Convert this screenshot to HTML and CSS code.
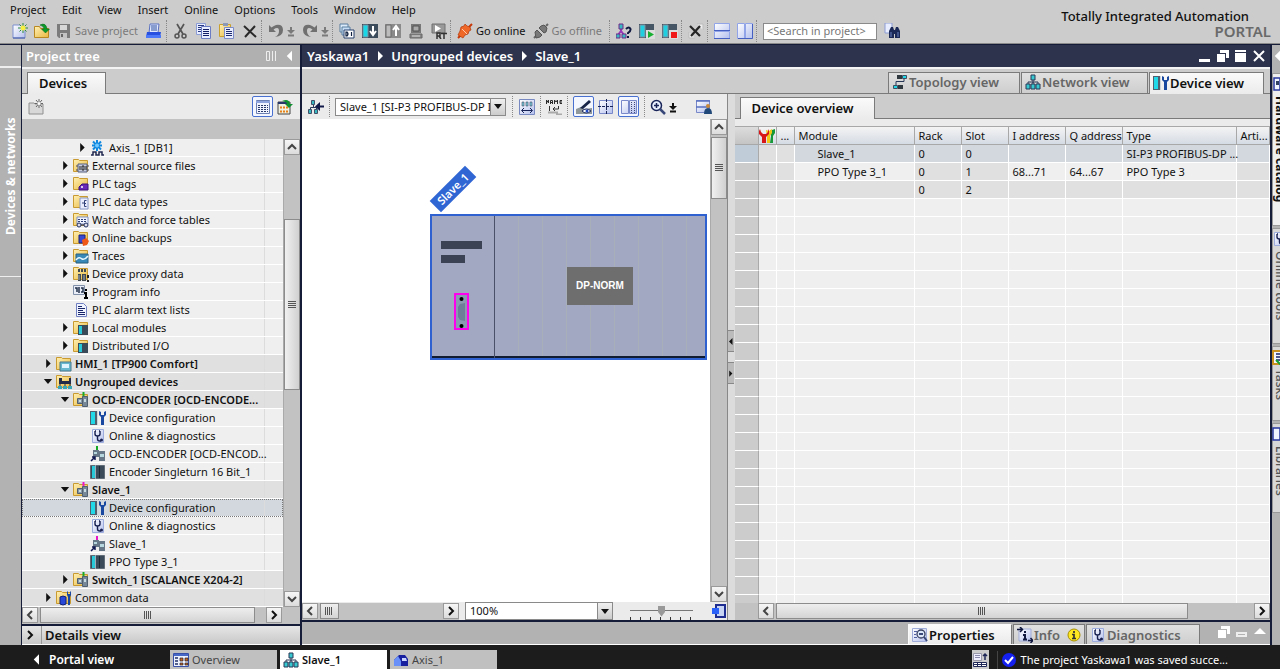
FILE: index.html
```html
<!DOCTYPE html>
<html lang="en">
<head>
<meta charset="utf-8">
<title>Totally Integrated Automation Portal</title>
<link rel="stylesheet" href="styles.css">
</head>
<body>
<svg class="sprite" aria-hidden="true">
  <defs>
    <linearGradient id="gf" x1="0" y1="0" x2="1" y2="1"><stop offset="0" stop-color="#fff0b4"/><stop offset="1" stop-color="#e8b840"/></linearGradient>
    <linearGradient id="gb" x1="0" y1="0" x2="1" y2="1"><stop offset="0" stop-color="#fff"/><stop offset="1" stop-color="#b4c0ee"/></linearGradient>
  </defs>
  <symbol id="new" viewBox="0 0 16 16"><path d="M1 2h7l5 5v8H1z" fill="url(#gb)" stroke="#7d8fce"/><path d="M1 15h12" stroke="#4058a8"/><path d="M11 0v10M6 5h10M7.500 1.500l7 7M14.500 1.500l-7 7" stroke="#2c8a3c"/><circle cx="11" cy="5" r="2.500" fill="#f8f040"/></symbol>
  <symbol id="open" viewBox="0 0 16 16"><path d="M.5 3.500h5l1 2h8v9H.5z" fill="url(#gf)" stroke="#b98820"/><path d="M6 2q6-3 7 4h2.500l-4 4-4-4H10Q10 3 6 2z" fill="#0a9a2a" stroke="#056018" stroke-width=".5"/></symbol>
  <symbol id="save" viewBox="0 0 16 16"><path d="M1 1h13v14H3l-2-2z" fill="#7c7c7c"/><path d="M4 2h7v5H4z" fill="#d8d8d8"/><path d="M4 10h7v5H4z" fill="#c4c4c4"/><path d="M5 11h2v3H5z" fill="#666"/></symbol>
  <symbol id="print" viewBox="0 0 16 16"><path d="M4 1h9l-1 9H3z" fill="#dfe8ff" stroke="#5a70c0"/><path d="M5 3h6M5 5h6M5 7h6" stroke="#3050a0"/><path d="M1 9h14l-1 5H0z" fill="#2850e0"/><path d="M0 12h15v3H0z" fill="#4a78f8"/></symbol>
  <symbol id="cut" viewBox="0 0 16 16"><path d="M4 1l6 10M11 1L5 11" stroke="#555" stroke-width="1.700"/><circle cx="4" cy="13" r="2" fill="none" stroke="#555" stroke-width="1.500"/><circle cx="11" cy="13" r="2" fill="none" stroke="#555" stroke-width="1.500"/></symbol>
  <symbol id="copy" viewBox="0 0 16 16"><path d="M.5.5h9v11h-9z" fill="#e8edff" stroke="#8c9cd4"/><path d="M2 2.500h6M2 4.500h6M2 6.500h6M2 8.500h6" stroke="#283880"/><path d="M5.500 3.500h9v12h-9z" fill="#e8edff" stroke="#6c7cc4"/><path d="M7 6.500h6M7 8.500h6M7 10.500h6M7 12.500h6" stroke="#101c68"/></symbol>
  <symbol id="paste" viewBox="0 0 16 16"><path d="M.5 1.500h11v12H.5z" fill="url(#gf)" stroke="#c8a030"/><path d="M4 0h5v3H4z" fill="#8c98b8"/><path d="M5.500 4.500h9v11h-9z" fill="#e8edff" stroke="#7c8cc8"/><path d="M7 6.500h4M7 8.500h6M7 10.500h6M7 12.500h6" stroke="#202c70"/></symbol>
  <symbol id="del" viewBox="0 0 16 16"><path d="M2 3l12 11M13 3L3 14" stroke="#2a2a2a" stroke-width="2"/></symbol>
  <symbol id="undo" viewBox="0 0 16 16"><path d="M1 2v7h7L5.500 6.500Q11 3 11 8q0 4-4 6 8-1 8-7 0-6-7-5-3 1-4.500 2.500z" fill="#707070"/></symbol>
  <symbol id="redo" viewBox="0 0 16 16"><path d="M15 2v7H8l2.500-2.500Q5 3 5 8q0 4 4 6-8-1-8-7 0-6 7-5 3 1 4.500 2.500z" fill="#707070"/></symbol>
  <symbol id="drop" viewBox="0 0 8 16"><path d="M4 4v4M1 12.500h6" stroke="currentColor" stroke-width="2"/><path d="M0 7h8l-4 4z" fill="currentColor"/></symbol>
  <symbol id="compile" viewBox="0 0 16 16"><path d="M1 1h8v8H1z" fill="#dcebfa" stroke="#5b7f9f"/><path d="M3 4h8v8H3z" fill="#c5def5" stroke="#5b7f9f"/><path d="M5 7h10v8H5z" fill="#fff" stroke="#28406c"/><path d="M7 9v4h1q2-2 0-4zM12.500 9v4" fill="none" stroke="#102040" stroke-width="1.200"/></symbol>
  <symbol id="down" viewBox="0 0 16 16"><path d="M0 1h16v14H0z" fill="#3c4c5c"/><path d="M1 2h5v12H1z" fill="#18d8e8" stroke="#7890a0"/><path d="M11 3v8M8 8l3 4 3-4" stroke="#fff" stroke-width="2" fill="none"/></symbol>
  <symbol id="up" viewBox="0 0 16 16"><path d="M0 1h16v14H0z" fill="#8a8a8a"/><path d="M1 2h5v12H1z" fill="#bcbcbc" stroke="#6a6a6a"/><path d="M11 13V5M8 7l3-4 3 4" stroke="#fff" stroke-width="2" fill="none"/></symbol>
  <symbol id="sim" viewBox="0 0 16 16"><path d="M3 1h10v9H3z" fill="#777"/><path d="M5 3h6v5H5z" fill="#aaa" stroke="#555"/><path d="M2 11h12v4H2z" fill="#888" stroke="#666"/><path d="M4 13h8" stroke="#ddd"/></symbol>
  <symbol id="rt" viewBox="0 0 16 16"><path d="M1 1h13v9H1z" fill="#999" stroke="#707070"/><path d="M4 2v7l6-3.500z" fill="#fff"/><path d="M6 16v-6h3v3H6m2 0l2 3M10 10.500h6M13 10.500V16" fill="none" stroke="#333" stroke-width="1.500"/></symbol>
  <symbol id="plug" viewBox="0 0 16 16"><path d="M1 15l3-3M12 4l3-3" stroke="#c83808" stroke-width="2"/><path d="M3 8l1-4 3-1 1-2 2 2 3 1 1 3-2 1-1 3-3 1-2 3-5-3z" fill="#f06828" stroke="#b03808" stroke-width=".7"/><path d="M5 6l5 5" stroke="#ffc8a8"/></symbol>
  <symbol id="unplug" viewBox="0 0 16 16"><path d="M1 15l3-3M13 3l2-2" stroke="#666" stroke-width="2"/><path d="M2 9l2-2 5 5-2 2-4 1zM8 3l3-1 3 3-1 4-2 1-5-5z" fill="#787878" stroke="#555"/></symbol>
  <symbol id="net" viewBox="0 0 16 16"><path d="M8 5v4M3 11V8h10v3M8 8v3" stroke="#283858" fill="none"/><path d="M6 1h4v5H6zM1 10h4v5H1zM6 10h4v5H6zM11 10h4v5h-4z" fill="#38c8d0" stroke="#283858"/></symbol>
  <symbol id="access" viewBox="0 0 16 16"><path d="M5 5v5M2 12L5 8l3 4" stroke="#9838b8" fill="none" stroke-width="2"/><path d="M3 1h4v5H3zM0 11h4v4H0zM6 11h4v4H6z" fill="#38b8c0" stroke="#702888"/><path d="M10 6q3-3 4.500 0 .5 2-2.500 4v1M12 13v2" stroke="#101840" stroke-width="2" fill="none"/></symbol>
  <symbol id="run" viewBox="0 0 16 16"><path d="M0 1h15v14H0z" fill="#465664"/><path d="M1 2h5v12H1z" fill="#20d0e0" stroke="#8090a0"/><path d="M7 7h9v9H7z" fill="#ddd"/><path d="M9 8v7l6-3.500z" fill="#18b030"/></symbol>
  <symbol id="stop" viewBox="0 0 16 16"><path d="M0 1h15v14H0z" fill="#465664"/><path d="M1 2h5v12H1z" fill="#20d0e0" stroke="#8090a0"/><path d="M7 7h9v9H7z" fill="#ddd"/><path d="M9 9h6v6H9z" fill="#f01818"/></symbol>
  <symbol id="xref" viewBox="0 0 16 16"><path d="M9 1h6v6M1 9v6h6" fill="#eee" stroke="#bbb"/><path d="M2 3l10 10M12 3L3 13" stroke="#252525" stroke-width="2.200"/></symbol>
  <symbol id="hsp" viewBox="0 0 16 16"><path d="M.5.5h15v7H.5zM.5 8.500h15v7H.5z" fill="url(#gb)" stroke="#92a4e8"/><path d="M0 7.500h16M0 15.500h16" stroke="#4560c0"/></symbol>
  <symbol id="vsp" viewBox="0 0 16 16"><path d="M.5.500h7v15h-7zM8.500.500h7v15h-7z" fill="url(#gb)" stroke="#92a4e8"/><path d="M15.500 1v14.500H1" stroke="#4560c0" fill="none"/></symbol>
  <symbol id="bino" viewBox="0 0 16 16"><path d="M1 0h7v10H1z" fill="#e8edff" stroke="#8c9cd4"/><path d="M5 8l2-4h2l1 3h1l1-3h2l2 4v7h-5v-4h-1v4H5z" fill="#1a2858"/><path d="M7 9v5M14 9v5" stroke="#6880c0"/></symbol>
  <symbol id="addfold" viewBox="0 0 16 16"><path d="M1 4h5l1 1h8v10H1z" fill="#d8d8d8" stroke="#909090"/><path d="M11 0v9M7 4.500h8M8 1l6 7M14 1L8 8" stroke="#666"/><circle cx="11" cy="4.500" r="1.500" fill="#fff"/></symbol>
  <symbol id="list" viewBox="0 0 16 16"><path d="M1.500 1.500h13v13h-13z" fill="#f0f4ff" stroke="#6c80b4"/><path d="M1 3h14" stroke="#8ea4dc" stroke-width="2"/><path d="M3 6.500h10M3 8.500h10M3 10.500h10M3 12.500h10" stroke="#283868" stroke-dasharray="2 1"/></symbol>
  <symbol id="export" viewBox="0 0 16 16"><path d="M1 3h12v12H1z" fill="#f0f0e0" stroke="#444"/><path d="M1 4h11" stroke="#283868" stroke-width="2"/><path d="M3 8.500h8M3 12.500h8" stroke="#e88018" stroke-width="2" stroke-dasharray="2 1"/><path d="M5 2q7-3 8 3h3l-4 4-4-4h2Q10 3 5 2z" fill="#109030"/></symbol>
  <symbol id="fold" viewBox="0 0 16 16"><path d="M.5 1.500h5l1 1h8v11H.5z" fill="url(#gf)" stroke="#c89a30"/></symbol>
  <symbol id="axis" viewBox="0 0 16 16"><path d="M7 0v11M2 5.500h10M3 1.500l8 8M11 1.500l-8 8" stroke="#1088e0" stroke-width="2"/><circle cx="7" cy="5.500" r="2" fill="#70c8ff"/><path d="M1 15h2v-3h3v3h3v-3h3v3h2" fill="none" stroke="#202850" stroke-width="1.500"/></symbol>
  <symbol id="src" viewBox="0 0 16 16"><use href="#fold"/><path d="M3 8h13M3 12h13" stroke="#445"/><path d="M5 6h9v8H5z" fill="#c8cce0" stroke="#556080"/><path d="M7 8v4M9 8h2v4H9zM13 8v4" stroke="#222" fill="none"/></symbol>
  <symbol id="tags" viewBox="0 0 16 16"><use href="#fold"/><path d="M6 11l3-3h6v6H6z" fill="#6828b8" stroke="#381078"/><circle cx="9" cy="11" r="1" fill="#fff"/></symbol>
  <symbol id="types" viewBox="0 0 16 16"><use href="#fold"/><path d="M7 4h8v11H7z" fill="#e8ecfc" stroke="#8898c8"/><path d="M9 9h2M13.500 6.500h-2v6h2M11 9.500h2" stroke="#304078" fill="none"/></symbol>
  <symbol id="watch" viewBox="0 0 16 16"><use href="#fold"/><path d="M4 5h11v7H4z" fill="#f0f4ff" stroke="#8090c0"/><path d="M5 7.500h9M5 9.500h9" stroke="#304078" stroke-dasharray="2 1"/><circle cx="6" cy="13" r="2" fill="#dde" stroke="#203060"/><circle cx="13" cy="13" r="2" fill="#dde" stroke="#203060"/><path d="M8 13h3" stroke="#203060"/></symbol>
  <symbol id="backup" viewBox="0 0 16 16"><use href="#fold"/><path d="M6 5h6v8H6z" fill="#3848d0" stroke="#182078"/><path d="M9 10l4-2 3 3-2 4-4 1z" fill="#f05818"/></symbol>
  <symbol id="traces" viewBox="0 0 16 16"><use href="#fold"/><path d="M3 6h12v9H3z" fill="#3888b8" stroke="#286080"/><path d="M3 12q3-4 6-1 3 1 6-3" fill="none" stroke="#e8f8ff" stroke-width="1.500"/></symbol>
  <symbol id="proxy" viewBox="0 0 16 16"><use href="#fold"/><path d="M5 3h2v3H5zM8 3h2v3H8zM11 3h2v3h-2zM5 8h3v7H5zM9 8h4v7H9z" fill="#404850"/><path d="M6 9v5M11 9v5" stroke="#a8b0b8"/><path d="M15 9v3M15 14v2" stroke="#222" stroke-width="2"/></symbol>
  <symbol id="prog" viewBox="0 0 16 16"><path d="M.5 1.500h11v9H.5z" fill="#e8edf8" stroke="#8090a8"/><path d="M2 4h2v4M6 3v6M8 4h2v4H8" stroke="#203048" stroke-width="1.500" fill="none"/><path d="M13 5v2M11 9h2v5M11 14h4" stroke="#000" stroke-width="2" fill="none"/></symbol>
  <symbol id="doc" viewBox="0 0 16 16"><path d="M3.500 1.500h7l3 3v10h-10z" fill="#f0f4ff" stroke="#7080c0"/><path d="M5 4.500h4M5 6.500h7M5 8.500h5M5 10.500h7M5 12.500h7" stroke="#182468"/></symbol>
  <symbol id="module" viewBox="0 0 16 16"><path d="M.5 1.500h14v13H.5z" fill="#3a4a58" stroke="#606c78"/><path d="M2 2h3v12H2z" fill="#28c8d8"/><path d="M5.500 1v14" stroke="#a0acb8"/><path d="M9.500 2v12" stroke="#1c2834"/></symbol>
  <symbol id="local" viewBox="0 0 16 16"><use href="#fold"/><path d="M5 5h10v10H5z" fill="#3a4a58"/><path d="M6 6h3v8H6z" fill="#28c8d8"/></symbol>
  <symbol id="hmi" viewBox="0 0 16 16"><use href="#fold"/><path d="M4 6h11v9H4z" fill="#68b8d0" stroke="#48788c"/><path d="M6 8h7v4H6z" fill="#dff4ff"/></symbol>
  <symbol id="ungr" viewBox="0 0 16 16"><use href="#fold"/><path d="M3 4h3v3h7V4h2v6H3z" fill="#222c48"/><path d="M4 10v3M9 10v3M14 10v3" stroke="#222c48"/><path d="M2 12h4v3H2zM7 12h4v3H7zM12 12h4v3h-4z" fill="#38a8b8"/></symbol>
  <symbol id="stg" viewBox="0 0 16 16"><use href="#fold"/><path d="M10.500 0v6" stroke="#18a828" stroke-width="2"/><path d="M4.500 6.500h5v5h-5z" fill="#8898a8" stroke="#506070"/><path d="M9.500 4.500h5v10h-5z" fill="#788898" stroke="#506070"/><path d="M6 8h2v2H6zM11 7h2v3h-2z" fill="#c8dce4"/></symbol>
  <symbol id="stp" viewBox="0 0 16 16"><use href="#fold"/><path d="M10.500 0v6" stroke="#e818c8" stroke-width="2"/><path d="M4.500 6.500h5v5h-5z" fill="#8898a8" stroke="#506070"/><path d="M9.500 4.500h5v10h-5z" fill="#788898" stroke="#506070"/><path d="M6 8h2v2H6zM11 7h2v3h-2z" fill="#c8dce4"/></symbol>
  <symbol id="cfg" viewBox="0 0 16 16"><path d="M0 1h8v14H0z" fill="#506070"/><path d="M1 2h4v12H1z" fill="#20d8e8"/><path d="M7.500 1v14" stroke="#ccd4dc"/><path d="M9 1v4l2 2v8h3V7l2-2V1l-2 1v3h-3V2z" fill="#1848a0"/></symbol>
  <symbol id="diag" viewBox="0 0 16 16"><path d="M2.500 1.500h11v13h-11z" fill="url(#gb)" stroke="#9cacdc"/><path d="M5 3h1M9 3h1M5 3v3q0 2 2.500 2T10 6V3M7.500 8v3q0 2 2.500 2h1" fill="none" stroke="#182050" stroke-width="1.400"/><circle cx="11.500" cy="12" r="1.500" fill="#182050"/></symbol>
  <symbol id="lkg" viewBox="0 0 16 16"><path d="M7 0v6" stroke="#18a828" stroke-width="2"/><path d="M3 4h6v7H3zM9 5h6v10H9z" fill="#667888"/><path d="M4 6h3v2H4zM10 8h4v3h-4z" fill="#b8d8e0"/><path d="M1 15l4-4M2 11h3v3" stroke="#101850" stroke-width="1.500" fill="none"/></symbol>
  <symbol id="lkp" viewBox="0 0 16 16"><path d="M7 0v6" stroke="#e818c8" stroke-width="2"/><path d="M3 4h6v7H3zM9 5h6v10H9z" fill="#667888"/><path d="M4 6h3v2H4zM10 8h4v3h-4z" fill="#b8d8e0"/><path d="M1 15l4-4M2 11h3v3" stroke="#101850" stroke-width="1.500" fill="none"/></symbol>
  <symbol id="common" viewBox="0 0 16 16"><use href="#fold"/><path d="M4 7q3-2 6 0v7q-3 2-6 0z" fill="#2848d8" stroke="#102078"/><path d="M11 1v4l1 2v8h2V7l1-2V1l-1 1v2h-2V2z" fill="#1848a0"/></symbol>
  <symbol id="gonet" viewBox="0 0 16 16"><path d="M5.500 5v4M2.500 12V8.500h6V11" stroke="#283858" fill="none"/><path d="M3.500 1.500h3v4h-3zM.500 10.500h3v4h-3zM6.500 10.500h3v4h-3z" fill="#38b8c0" stroke="#405068"/><path d="M16 7.500h-5" stroke="#101848" stroke-width="2"/><path d="M12 3L7 7.500 12 12z" fill="#101848"/></symbol>
  <symbol id="width" viewBox="0 0 16 16"><path d="M.5.500h15v15H.5z" fill="url(#gb)" stroke="#7888c0"/><path d="M3 3h2v4H3zM7 3h2v4H7zM11 3h2v4h-2z" fill="#7ccce0" stroke="#334" stroke-width=".5"/><path d="M3 11.500h10M5 9L2.500 11.500 5 14M11 9l2.500 2.500L11 14" fill="none" stroke="#182458"/></symbol>
  <symbol id="name" viewBox="0 0 16 16"><path d="M.5 5V1l2 3V1M4.500 5V1.500h2V5M4.500 3.500h2M8.500 5V1l1.500 2 1.500-2v4M16 1.500h-2v3h2M14 3h2" fill="none" stroke="#2a2a2a"/><path d="M3.500 7v5M12.500 7v3H7M9 8l-2 2 2 2" fill="none" stroke="#333"/><path d="M2 13.500h9v2h5" fill="none" stroke="#aaa" stroke-width="2"/></symbol>
  <symbol id="eye" viewBox="0 0 16 16"><path d="M0 10l5-2 3 2 8-1v6H0z" fill="#90989c"/><path d="M4 9l9-8 2 2-8 7z" fill="#182448"/><path d="M6 12q4-4 9 0-5 4-9 0z" fill="#fff" stroke="#202c60"/><circle cx="11" cy="12" r="1.500" fill="#2048c0"/></symbol>
  <symbol id="grid" viewBox="0 0 16 16"><path d="M1.500 1.500h13v13h-13z" fill="url(#gb)" stroke="#7888c8"/><path d="M0 7.500h16M8.500 0v16" stroke="#182458" stroke-dasharray="3 1"/></symbol>
  <symbol id="panes" viewBox="0 0 16 16"><path d="M.5 1.500h7v13h-7zM8.500 1.500h7v13h-7z" fill="url(#gb)" stroke="#7888c8"/><path d="M10.500 3v11M13.500 3v11" stroke="#404878" stroke-dasharray="1 1"/></symbol>
  <symbol id="mag" viewBox="0 0 16 16"><circle cx="6.500" cy="6.500" r="5" fill="#e8f0ff" stroke="#182458" stroke-width="1.500"/><path d="M4 6.500h5M6.500 4v5" stroke="#182458" stroke-width="1.500"/><path d="M10 10l5 5" stroke="#384878" stroke-width="2.500"/></symbol>
  <symbol id="layout" viewBox="0 0 16 16"><path d="M.5 1.500h13v12H.5z" fill="url(#gb)" stroke="#7888c8"/><path d="M0 2h14M0 8h14" stroke="#5870c0" stroke-width="1.500"/><circle cx="12" cy="7" r="2" fill="#c88838"/><path d="M8 15q0-6 4-6t4 6z" fill="#204878"/></symbol>
  <symbol id="topo" viewBox="0 0 16 16"><path d="M6 4h3M4 11V7.500h8V5" fill="none" stroke="#283858"/><path d="M5 1h5v4H5zM6 11h5v4H6z" fill="#303840"/><path d="M10.500 1.500h4v3h-4zM1.500 11.500h4v3h-4z" fill="#20d8e8" stroke="#405060"/></symbol>
  <symbol id="wrench" viewBox="0 0 16 16"><path d="M11 2l1 6-1 7h3V8l2-3V1l-3 1z" fill="#189838"/><path d="M7 2l1 6v7h3V8l2-3V1l-3 2z" fill="#f0c818"/><path d="M1 1L0 3v3l3 3v6h4V9l3-3V3L9 1v3L7 6H4L2 4z" fill="#d81818"/></symbol>
  <symbol id="props" viewBox="0 0 16 16"><path d="M.5 1.500h14v13H.5z" fill="url(#gb)" stroke="#a0acd8"/><path d="M2 4.500h3M2 7.500h2M2 10.500h3" stroke="#5060a0"/><circle cx="9" cy="7" r="4" fill="#dce8fa" stroke="#384060" stroke-width="1.300"/><path d="M7 7h4M12 10l3 4" stroke="#384878" stroke-width="2"/></symbol>
  <symbol id="info" viewBox="0 0 16 16"><path d="M2 2h12v12H2z" fill="url(#gb)" stroke="#a0acd8"/><path d="M0 2.500h5M3 0l2.500 2.500L3 5M11 13.500h5M13.500 11l2.500 2.500-2.500 2.500" fill="none" stroke="#101840" stroke-width="1.500"/><path d="M8 4v2M6 8h2v4M6 12.500h4" fill="none" stroke="#101840" stroke-width="2"/></symbol>
  <symbol id="warn" viewBox="0 0 14 14"><circle cx="7" cy="7" r="6" fill="#ffe820" stroke="#a89000"/><path d="M7 3v2M5 6.500h2V10M5 10.500h4" fill="none" stroke="#333" stroke-width="1.700"/></symbol>
  <symbol id="over" viewBox="0 0 16 16"><path d="M.5 1.500h15v13H.5z" fill="#eef2ff" stroke="#3850a8"/><path d="M1 3h14" stroke="#4868c8" stroke-width="2"/><path d="M2 6h3M2 9h3M2 12h3" stroke="#203068" stroke-width="1.500"/><path d="M7 6h3v3H7zM12 6h3v3h-3zM7 11h3v2H7zM12 11h3v2h-3z" fill="#c86820" stroke="#223" stroke-width=".7"/></symbol>
  <symbol id="axisb" viewBox="0 0 16 16"><path d="M1 8l5-5h6l3 4v7H1z" fill="#1820a0"/><path d="M1 8l4-4 3 5v5H1z" fill="#6890f8"/><path d="M9 6h4l1 3H9z" fill="#c8d4ff"/></symbol>
  <symbol id="tr" viewBox="0 0 8 10"><path d="M2 0l5 5-5 5z" fill="currentColor"/></symbol>
  <symbol id="td" viewBox="0 0 10 6"><path d="M0 0h10L5 6z" fill="currentColor"/></symbol>
  <symbol id="tl" viewBox="0 0 8 14"><path d="M8 0L1 7l7 7z" fill="currentColor"/></symbol>
  <symbol id="cu" viewBox="0 0 10 10"><path d="M1 7l4-4 4 4" fill="none" stroke="#444" stroke-width="2"/></symbol>
  <symbol id="cd" viewBox="0 0 10 10"><path d="M1 3l4 4 4-4" fill="none" stroke="#444" stroke-width="2"/></symbol>
  <symbol id="cl" viewBox="0 0 10 10"><path d="M7 1L3 5l4 4" fill="none" stroke="#444" stroke-width="2"/></symbol>
  <symbol id="cr" viewBox="0 0 10 10"><path d="M3 1l4 4-4 4" fill="none" stroke="currentColor" stroke-width="2"/></symbol>
  <symbol id="restore" viewBox="0 0 12 12"><path d="M0 4h8v8H0zM3 0h9v8H9V3H3z" fill="#fff"/></symbol>
</svg>

<header class="top">
  <nav class="menu" aria-label="Main menu">
    <button>Project</button><button>Edit</button><button>View</button><button>Insert</button><button>Online</button><button>Options</button><button>Tools</button><button>Window</button><button>Help</button>
  </nav>
  <div class="toolbar">
    <div class="group first">
      <button aria-label="New"><svg class="ic"><use href="#new"/></svg></button>
      <button aria-label="Open"><svg class="ic"><use href="#open"/></svg></button>
      <button class="text off wide"><svg class="ic"><use href="#save"/></svg>Save project</button>
      <button aria-label="Print"><svg class="ic"><use href="#print"/></svg></button>
    </div>
    <div class="group">
      <button aria-label="Cut"><svg class="ic"><use href="#cut"/></svg></button>
      <button aria-label="Copy"><svg class="ic"><use href="#copy"/></svg></button>
      <button aria-label="Paste"><svg class="ic"><use href="#paste"/></svg></button>
      <button aria-label="Delete"><svg class="ic"><use href="#del"/></svg></button>
    </div>
    <div class="group">
      <button class="text off" aria-label="Undo"><svg class="ic"><use href="#undo"/></svg><svg class="dr"><use href="#drop"/></svg></button>
      <button class="text off" aria-label="Redo"><svg class="ic"><use href="#redo"/></svg><svg class="dr"><use href="#drop"/></svg></button>
    </div>
    <div class="group">
      <button aria-label="Compile"><svg class="ic"><use href="#compile"/></svg></button>
      <button aria-label="Download"><svg class="ic"><use href="#down"/></svg></button>
      <button aria-label="Upload"><svg class="ic"><use href="#up"/></svg></button>
      <button aria-label="Simulate"><svg class="ic"><use href="#sim"/></svg></button>
      <button aria-label="Start runtime"><svg class="ic"><use href="#rt"/></svg></button>
    </div>
    <div class="group online">
      <button class="text"><svg class="ic"><use href="#plug"/></svg>Go online</button>
      <button class="text off"><svg class="ic"><use href="#unplug"/></svg>Go offline</button>
    </div>
    <div class="group">
      <button aria-label="Accessible devices"><svg class="ic"><use href="#access"/></svg></button>
      <button aria-label="Start CPU"><svg class="ic"><use href="#run"/></svg></button>
      <button aria-label="Stop CPU"><svg class="ic"><use href="#stop"/></svg></button>
    </div>
    <div class="group"><button aria-label="Cross-references"><svg class="ic"><use href="#xref"/></svg></button></div>
    <div class="group">
      <button aria-label="Split horizontally"><svg class="ic"><use href="#hsp"/></svg></button>
      <button aria-label="Split vertically"><svg class="ic"><use href="#vsp"/></svg></button>
    </div>
    <div class="group">
      <input class="search" type="text" aria-label="Search in project" placeholder="&lt;Search in project&gt;">
      <button aria-label="Search"><svg class="ic"><use href="#bino"/></svg></button>
    </div>
  </div>
  <div class="brand"><span>Totally Integrated Automation</span><strong>PORTAL</strong></div>
</header>

<main class="work">
  <aside class="rail"><span class="railtop"></span><button class="railtab">Devices &amp; networks</button></aside>

  <section class="tree">
    <div class="title"><h2>Project tree</h2>
      <svg width="10" height="12" viewBox="0 0 10 12"><path d="M.5 1.500h3v9h-3zM6.500 1v10M9.500 1v10" fill="none" stroke="#eee"/></svg>
      <svg class="back" width="6" height="12"><use href="#tl"/></svg></div>
    <div class="tabs"><button class="tab on devices">Devices</button></div>
    <div class="tools">
      <button aria-label="Add folder"><svg class="ic"><use href="#addfold"/></svg></button>
      <span class="grow"></span>
      <button class="tog" aria-label="Show overview"><svg class="ic"><use href="#list"/></svg></button>
      <button aria-label="Export"><svg class="ic"><use href="#export"/></svg></button>
    </div>
    <div class="strip"></div>
    <div class="treebody">
      <ul class="rows">
        <li class="l4"><svg class="ex"><use href="#tr"/></svg><svg class="ic"><use href="#axis"/></svg><span>Axis_1 [DB1]</span></li>
        <li class="l3"><svg class="ex"><use href="#tr"/></svg><svg class="ic"><use href="#src"/></svg><span>External source files</span></li>
        <li class="l3"><svg class="ex"><use href="#tr"/></svg><svg class="ic"><use href="#tags"/></svg><span>PLC tags</span></li>
        <li class="l3"><svg class="ex"><use href="#tr"/></svg><svg class="ic"><use href="#types"/></svg><span>PLC data types</span></li>
        <li class="l3"><svg class="ex"><use href="#tr"/></svg><svg class="ic"><use href="#watch"/></svg><span>Watch and force tables</span></li>
        <li class="l3"><svg class="ex"><use href="#tr"/></svg><svg class="ic"><use href="#backup"/></svg><span>Online backups</span></li>
        <li class="l3"><svg class="ex"><use href="#tr"/></svg><svg class="ic"><use href="#traces"/></svg><span>Traces</span></li>
        <li class="l3"><svg class="ex"><use href="#tr"/></svg><svg class="ic"><use href="#proxy"/></svg><span>Device proxy data</span></li>
        <li class="l3"><svg class="ex"></svg><svg class="ic"><use href="#prog"/></svg><span>Program info</span></li>
        <li class="l3"><svg class="ex"></svg><svg class="ic"><use href="#doc"/></svg><span>PLC alarm text lists</span></li>
        <li class="l3"><svg class="ex"><use href="#tr"/></svg><svg class="ic"><use href="#local"/></svg><span>Local modules</span></li>
        <li class="l3"><svg class="ex"><use href="#tr"/></svg><svg class="ic"><use href="#local"/></svg><span>Distributed I/O</span></li>
        <li class="l2 b"><svg class="ex"><use href="#tr"/></svg><svg class="ic"><use href="#hmi"/></svg><span>HMI_1 [TP900 Comfort]</span></li>
        <li class="l2 b"><svg class="ex dn"><use href="#td"/></svg><svg class="ic"><use href="#ungr"/></svg><span>Ungrouped devices</span></li>
        <li class="l3 b"><svg class="ex dn"><use href="#td"/></svg><svg class="ic"><use href="#stg"/></svg><span>OCD-ENCODER [OCD-ENCODE...</span></li>
        <li class="l4"><svg class="ex"></svg><svg class="ic"><use href="#cfg"/></svg><span>Device configuration</span></li>
        <li class="l4"><svg class="ex"></svg><svg class="ic"><use href="#diag"/></svg><span>Online &amp; diagnostics</span></li>
        <li class="l4"><svg class="ex"></svg><svg class="ic"><use href="#lkg"/></svg><span>OCD-ENCODER [OCD-ENCOD...</span></li>
        <li class="l4"><svg class="ex"></svg><svg class="ic"><use href="#module"/></svg><span>Encoder Singleturn 16 Bit_1</span></li>
        <li class="l3 b"><svg class="ex dn"><use href="#td"/></svg><svg class="ic"><use href="#stp"/></svg><span>Slave_1</span></li>
        <li class="l4 sel"><svg class="ex"></svg><svg class="ic"><use href="#cfg"/></svg><span>Device configuration</span></li>
        <li class="l4"><svg class="ex"></svg><svg class="ic"><use href="#diag"/></svg><span>Online &amp; diagnostics</span></li>
        <li class="l4"><svg class="ex"></svg><svg class="ic"><use href="#lkp"/></svg><span>Slave_1</span></li>
        <li class="l4"><svg class="ex"></svg><svg class="ic"><use href="#module"/></svg><span>PPO Type 3_1</span></li>
        <li class="l3 b"><svg class="ex"><use href="#tr"/></svg><svg class="ic"><use href="#stg"/></svg><span>Switch_1 [SCALANCE X204-2]</span></li>
        <li class="l2 shade"><svg class="ex"><use href="#tr"/></svg><svg class="ic"><use href="#common"/></svg><span>Common data</span></li>
      </ul>
      <div class="vs"><button class="sb" aria-label="Scroll up"><svg class="ch"><use href="#cu"/></svg></button><i class="gap tv1"></i><i class="thumb tv2"></i><i class="gap tv3"></i><button class="sb" aria-label="Scroll down"><svg class="ch"><use href="#cd"/></svg></button></div>
    </div>
    <div class="hs treeh"><button class="sb" aria-label="Scroll left"><svg class="ch"><use href="#cl"/></svg></button><i class="thumb th1"></i><i class="gap th2"></i><button class="sb" aria-label="Scroll right"><svg class="ch"><use href="#cr"/></svg></button></div>
    <div class="details"><button aria-label="Expand details"><svg class="ch"><use href="#cr"/></svg></button><h2>Details view</h2></div>
  </section>

  <section class="editor">
    <div class="title dark">
      <h2>Yaskawa1</h2><svg class="ex"><use href="#tr"/></svg><h2>Ungrouped devices</h2><svg class="ex"><use href="#tr"/></svg><h2>Slave_1</h2>
      <span class="grow"></span>
      <div class="win">
        <button aria-label="Minimize"><svg width="12" height="12"><path d="M0 9h11v3H0z" fill="#fff"/></svg></button>
        <button aria-label="Restore"><svg width="12" height="12"><use href="#restore"/></svg></button>
        <button aria-label="Maximize"><svg width="12" height="12"><path d="M0 0h11v2H0zM0 3h11v9H0z" fill="#fff"/></svg></button>
        <button aria-label="Close"><svg width="12" height="12"><path d="M1 1l10 10M11 1L1 11" stroke="#fff" stroke-width="2"/></svg></button>
      </div>
    </div>
    <div class="tabs views">
      <button class="tab v1"><svg class="ic"><use href="#topo"/></svg>Topology view</button>
      <button class="tab v2"><svg class="ic"><use href="#net"/></svg>Network view</button>
      <button class="tab on v3"><svg class="ic"><use href="#cfg"/></svg>Device view</button>
    </div>
    <div class="split">
      <div class="canvaspane">
        <div class="tools ct">
          <button aria-label="Go to network view"><svg class="ic"><use href="#gonet"/></svg></button>
          <i class="sep"></i>
          <div class="combo dev"><select aria-label="Device"><option>Slave_1 [SI-P3 PROFIBUS-DP INTERFACE]</option></select><span class="arr"><svg><use href="#td"/></svg></span></div>
          <i class="sep"></i>
          <button aria-label="Fit width"><svg class="ic"><use href="#width"/></svg></button>
          <i class="sep"></i>
          <button aria-label="Show names"><svg class="ic"><use href="#name"/></svg></button>
          <i class="sep"></i>
          <div class="toggles"><button class="tog" aria-label="Show addresses"><svg class="ic"><use href="#eye"/></svg></button>
          <button aria-label="Page breaks"><svg class="ic"><use href="#grid"/></svg></button>
          <button class="tog" aria-label="Table view"><svg class="ic"><use href="#panes"/></svg></button></div>
          <i class="sep"></i>
          <button class="text" aria-label="Zoom"><svg class="ic"><use href="#mag"/></svg><svg class="dr"><use href="#drop"/></svg></button>
          <span class="grow"></span>
          <button class="last" aria-label="Save layout"><svg class="ic"><use href="#layout"/></svg></button>
        </div>
        <div class="canvasrow">
          <div class="canvas">
            <div class="device">
              <span class="tag">Slave_1</span>
              <div class="head"><i class="bar long"></i><i class="bar short"></i>
                <svg class="port" width="15" height="37" viewBox="0 0 15 37"><path d="M1 1h13v35H1z" fill="#8a9ab0" stroke="#f0e" stroke-width="2"/><path d="M11 10v18l-5-1-2-3V14l2-3z" fill="#6e7e98"/><circle cx="7.500" cy="6" r="2"/><circle cx="7.500" cy="33" r="2"/></svg></div>
              <div class="slots"><span class="norm">DP-NORM</span></div>
            </div>
          </div>
          <div class="vs"><button class="sb" aria-label="Scroll up"><svg class="ch"><use href="#cu"/></svg></button><i class="thumb cv1"></i><i class="gap cv2"></i><button class="sb" aria-label="Scroll down"><svg class="ch"><use href="#cd"/></svg></button></div>
        </div>
        <div class="zoombar">
          <div class="hs ch1"><button class="sb" aria-label="Scroll left"><svg class="ch"><use href="#cl"/></svg></button><i class="thumb cb1"></i><i class="gap cb2"></i><button class="sb" aria-label="Scroll right"><svg class="ch"><use href="#cr"/></svg></button></div>
          <div class="combo zoom"><select aria-label="Zoom"><option>100%</option></select><span class="arr"><svg><use href="#td"/></svg></span></div>
          <input class="range" type="range" aria-label="Zoom level">
          <span class="grow"></span>
          <button aria-label="Overview navigation"><svg class="ic" viewBox="0 0 16 16"><path d="M5 2h9v12H5z" fill="#c8d4f4" stroke="#1c2c90" stroke-width="2"/><path d="M1 5h7v6H1z" fill="#2860f8"/></svg></button>
        </div>
      </div>
      <div class="splitter"><button aria-label="Collapse left"><svg><use href="#tl"/></svg></button><button aria-label="Collapse right"><svg><use href="#tr"/></svg></button></div>
      <div class="overview">
        <div class="tabs ov"><button class="tab on ovt">Device overview</button></div>
        <div class="tablewrap">
          <table>
            <colgroup><col class="c0"><col class="c1"><col class="c1"><col class="c3"><col class="c4"><col class="c4"><col class="c6"><col class="c6"><col class="c8"><col></colgroup>
            <thead><tr><th></th><th class="w"><svg class="ic"><use href="#wrench"/></svg></th><th>...</th><th>Module</th><th>Rack</th><th>Slot</th><th>I address</th><th>Q address</th><th>Type</th><th>Arti...</th></tr></thead>
            <tbody>
              <tr class="cur"><td><td><td><td class="in">Slave_1<td>0<td>0<td><td><td>SI-P3 PROFIBUS-DP ...<td></tr>
              <tr class="mix"><td><td><td><td class="in">PPO Type 3_1<td>0<td>1<td>68...71<td>64...67<td>PPO Type 3<td></tr>
              <tr class="gray"><td><td><td><td><td>0<td>2<td><td><td><td></tr>
              <tr><td><td><td><td><td><td><td><td><td><td></tr>
              <tr><td><td><td><td><td><td><td><td><td><td></tr>
              <tr><td><td><td><td><td><td><td><td><td><td></tr>
              <tr><td><td><td><td><td><td><td><td><td><td></tr>
              <tr><td><td><td><td><td><td><td><td><td><td></tr>
              <tr><td><td><td><td><td><td><td><td><td><td></tr>
              <tr><td><td><td><td><td><td><td><td><td><td></tr>
              <tr><td><td><td><td><td><td><td><td><td><td></tr>
              <tr><td><td><td><td><td><td><td><td><td><td></tr>
              <tr><td><td><td><td><td><td><td><td><td><td></tr>
              <tr><td><td><td><td><td><td><td><td><td><td></tr>
              <tr><td><td><td><td><td><td><td><td><td><td></tr>
              <tr><td><td><td><td><td><td><td><td><td><td></tr>
              <tr><td><td><td><td><td><td><td><td><td><td></tr>
              <tr><td><td><td><td><td><td><td><td><td><td></tr>
              <tr><td><td><td><td><td><td><td><td><td><td></tr>
              <tr><td><td><td><td><td><td><td><td><td><td></tr>
              <tr><td><td><td><td><td><td><td><td><td><td></tr>
              <tr><td><td><td><td><td><td><td><td><td><td></tr>
              <tr><td><td><td><td><td><td><td><td><td><td></tr>
              <tr><td><td><td><td><td><td><td><td><td><td></tr>
              <tr><td><td><td><td><td><td><td><td><td><td></tr>
              <tr><td><td><td><td><td><td><td><td><td><td></tr>
            </tbody>
          </table>
        </div>
        <div class="hs oh"><button class="sb" aria-label="Scroll left"><svg class="ch"><use href="#cl"/></svg></button><i class="thumb oh1"></i><i class="gap oh2"></i><button class="sb" aria-label="Scroll right"><svg class="ch"><use href="#cr"/></svg></button></div>
      </div>
    </div>
    <div class="inspector">
      <button class="tab on p1"><svg class="ic"><use href="#props"/></svg>Properties</button>
      <button class="tab p2"><svg class="ic"><use href="#info"/></svg>Info<svg class="wn"><use href="#warn"/></svg></button>
      <button class="tab p3"><svg class="ic"><use href="#diag"/></svg>Diagnostics</button>
      <div class="win">
        <button aria-label="Float"><svg width="12" height="12"><use href="#restore"/></svg></button>
        <button aria-label="Minimize"><svg width="12" height="12"><path d="M1 7h9v3H1z" fill="none" stroke="#eee" stroke-width="2"/></svg></button>
        <button aria-label="Expand"><svg width="12" height="12"><path d="M0 8h12L6 2z" fill="#fff"/></svg></button>
      </div>
    </div>
  </section>

  <aside class="cards">
    <div class="cardtop"><svg width="6" height="12"><use href="#tl"/></svg></div>
    <button class="card on k1"><svg class="ic" viewBox="0 0 16 16"><path d="M2 2h6v12H2zM8 2h7v12H8z" fill="#f0f4ff" stroke="#2838a0" stroke-width="1.500"/><path d="M4 5h3v4H4z" fill="#304060"/></svg>Hardware catalog</button>
    <button class="card k2"><svg class="ic"><use href="#diag"/></svg>Online tools</button>
    <button class="card k3"><svg class="ic" viewBox="0 0 16 16"><path d="M1 2h14v13H1z" fill="#f4f6ff" stroke="#c89020" stroke-width="2"/><path d="M4 5h9M4 8h9M4 11h9" stroke="#182468" stroke-width="1.500"/><path d="M4 11l4 4 6-6" stroke="#18a030" stroke-width="2" fill="none"/></svg>Tasks</button>
    <button class="card k4"><svg class="ic" viewBox="0 0 16 16"><path d="M1 2h7v12H1zM8 2h7v12H8z" fill="#f0f4ff" stroke="#2838a0" stroke-width="1.500"/></svg>Libraries</button>
  </aside>
</main>

<footer class="foot">
  <button class="portal"><svg><use href="#tl"/></svg>Portal view</button>
  <button class="task"><svg class="ic"><use href="#over"/></svg>Overview</button>
  <button class="task on"><svg class="ic"><use href="#net"/></svg>Slave_1</button>
  <button class="task"><svg class="ic"><use href="#axisb"/></svg>Axis_1</button>
  <div class="status">
    <button class="stb" aria-label="Show messages"><svg class="ic" viewBox="0 0 16 16"><path d="M1.500 1.500h8v7h-8z" fill="#eef" stroke="#99a"/><path d="M3 3.500h5M3 5.500h5" stroke="#88a"/><path d="M1.500 10.500h13v4h-13z" fill="#fff" stroke="#202858"/><path d="M5.500 10v5M9.500 10v5M1 12.500h14" stroke="#202858"/><path d="M13 8V2M11 4l2-2 2 2" fill="none" stroke="#202858" stroke-width="1.500"/></svg></button>
    <div class="msg"><svg width="14" height="14" viewBox="0 0 14 14"><circle cx="7" cy="7" r="7" fill="#1420f0"/><path d="M3 7l3 3 5-6" fill="none" stroke="#fff" stroke-width="2"/></svg><span>The project Yaskawa1 was saved succe...</span></div>
  </div>
</footer>
</body>
</html>
```
FILE: styles.css
```css
* { box-sizing: border-box; }
body { margin: 0; height: 100vh; display: flex; flex-direction: column; overflow: hidden; font: 11px/18px "Noto Sans", "Open Sans", sans-serif; color: #111; background: #ccc; }
button, input, select { font: inherit; color: inherit; margin: 0; padding: 0; border: 0; background: none; }
button { display: flex; align-items: center; white-space: nowrap; flex: none; }
svg { display: block; flex: none; }
h2 { margin: 0; font-size: 13px; font-weight: 600; line-height: 22px; white-space: nowrap; }
ul { margin: 0; padding: 0; list-style: none; }
.sprite { position: absolute; width: 0; height: 0; }
.ic { width: 16px; height: 16px; }
.dr { width: 8px; height: 16px; }
.ch { width: 10px; height: 10px; }
.ex { width: 8px; height: 10px; }
.grow { flex: 1; }

/* menu and main toolbar */
.top { display: grid; grid-template-columns: 1fr auto; background: #ccc; border-bottom: 1px solid #8a8a8a; flex: none; }
.menu { display: flex; gap: 16px; padding-left: 10px; height: 19px; }
.toolbar { display: flex; align-items: flex-start; height: 24px; padding-top: 1px; }
.group { display: flex; align-items: center; gap: 7px; height: 22px; padding: 0 3px 0 6px; border-left: 1px dotted #888; }
.group.first { border: 0; padding: 0 4px 0 12px; gap: 6px; }
.group.online { padding-right: 7px; }
.text { gap: 3px; }
.off { color: #7a7a7a; }
.wide { padding-right: 2px; }
.search { width: 114px; height: 17px; background: #fff; border: 1px solid #8a8a8a; padding: 0 3px; }
.search::placeholder { color: #777; opacity: 1; }
.brand { grid-column: 2; grid-row: 1 / 3; display: flex; flex-direction: column; align-items: flex-end; padding: 8px 9px 0 0; font-size: 13px; line-height: 16px; font-weight: 500; }
.brand span { padding-right: 22px; }
.brand strong { font-size: 15px; line-height: 14px; font-weight: 600; color: #6a6a6a; }

/* frame */
.work { flex: 1; min-height: 0; display: flex; border-top: 1px solid #141c38; background: #141c38; }
.rail { width: 21px; background: #b2b2b2; display: flex; flex-direction: column; flex: none; }
.railtop { height: 23px; border-bottom: 2px solid #eee; }
.railtab { height: 209px; width: 21px; writing-mode: vertical-rl; transform: rotate(180deg); color: #fff; font-weight: 700; font-size: 12px; border-top: 1px solid #eee; padding-top: 41px; justify-content: flex-start; }
.tree { width: 278px; margin: 0 2px 0 1px; flex: none; display: flex; flex-direction: column; background: #c2c2c2; min-height: 0; }
.title { display: flex; align-items: center; height: 24px; flex: none; padding: 0 8px 0 4px; background: #b0b0b0; border-bottom: 2px solid #f4f4f4; color: #fff; }
.title h2:first-child { flex: 1; }
.back { margin-left: 10px; }
.tabs { display: flex; height: 25px; flex: none; align-items: flex-end; background: #ccc; border-bottom: 1px solid #7a7a7a; padding-left: 5px; }
.tab { height: 21px; border: 1px solid #7a7a7a; border-bottom: 0; background: linear-gradient(#e0e0e0, #cecece); font-size: 13px; font-weight: 600; color: #666; gap: 1px; padding: 0 3px 2px; }
.tab.on { background: linear-gradient(#fafafa, #ebebeb); color: #111; margin-bottom: -1px; height: 22px; }
.devices { padding-left: 11px; padding-right: 18px; }
.tools { display: flex; align-items: center; height: 25px; flex: none; background: #ebebeb; padding: 0 7px 0 6px; }
.tog { width: 21px; height: 21px; border: 1px solid #4870d0; border-radius: 2px; background: #f4f7ff; justify-content: center; margin-right: 4px; }
.strip { height: 20px; flex: none; background: #c2c2c2; }
.treebody { flex: 1; min-height: 0; display: flex; }
.rows { flex: 1; min-width: 0; overflow: hidden; background: #efefef; }
.rows li { display: flex; align-items: center; height: 18px; border-bottom: 1px solid #fff; padding-right: 14px; background: linear-gradient(#dcdcdc, #dcdcdc) calc(100% - 18px) 0 / 1px 100% no-repeat #efefef; }
.rows li span { flex: 1; min-width: 0; overflow: hidden; text-overflow: ellipsis; white-space: nowrap; line-height: 17px; }
.rows .ex { width: 10px; height: 9px; margin-right: 3px; color: #111; }
.rows .dn { height: 5px; }
.rows .ic { margin-right: 3px; }
.l2 { padding-left: 21px; }
.l3 { padding-left: 38px; }
.l4 { padding-left: 55px; }
.rows .b { font-weight: 600; background-color: #e0e0e0; }
.rows .shade { background-color: #e0e0e0; }
.rows .sel { background-color: #d2d8dd; outline: 1px dotted #777; outline-offset: -1px; }
.details { display: flex; height: 21px; flex: none; border-top: 2px solid #141c38; background: linear-gradient(#e6e6e6, #c8c8c8); border-bottom: 1px solid #fff; }
.details button { width: 20px; padding-left: 3px; border-right: 1px solid #999; }
.details h2 { line-height: 19px; padding-left: 3px; }

/* scroll bars */
.vs { width: 17px; flex: none; display: flex; flex-direction: column; background: #c2c2c2; border-left: 1px solid #aaa; }
.hs { height: 17px; display: flex; background: #c2c2c2; flex: none; }
.sb { width: 16px; height: 16px; justify-content: center; background: linear-gradient(#f6f6f6, #dcdcdc); border: 1px solid #9a9a9a; }
.thumb { border: 1px solid #8c8c8c; background: linear-gradient(90deg, #f0f0f0, #d0d0d0); display: flex; align-items: center; justify-content: center; }
.hs .thumb { height: 16px; background: linear-gradient(#eee, #d4d4d4); margin-left: 2px; }
.vs .thumb::after { content: ""; width: 8px; height: 7px; background: repeating-linear-gradient(#555 0 1px, transparent 1px 2px); }
.hs .thumb::after { content: ""; width: 8px; height: 8px; background: repeating-linear-gradient(90deg, #555 0 1px, transparent 1px 2px); }
.tv1 { flex: 64; } .tv2 { flex: 170; } .tv3 { flex: 201; }
.treeh { padding-right: 18px; }
.th1 { flex: 213; } .th2 { flex: 11; }
.cv1 { flex: 60; margin-top: 2px; } .cv2 { flex: 389; }
.cb1 { flex: 17; } .cb2 { flex: 105; }
.oh1 { flex: 411; } .oh2 { flex: 66; }

/* editor */
.editor { flex: 1; min-width: 0; display: flex; flex-direction: column; margin-right: 2px; }
.title.dark { background: #2d334d; padding: 0 5px; }
.title.dark h2:first-child { flex: none; }
.title .ex { margin: 0 7px; }
.win { display: flex; gap: 6px; }
.views { justify-content: flex-end; padding: 0 6px 0 0; gap: 1px; }
.v1 { width: 132px; } .v2 { width: 127px; } .v3 { width: 115px; }
.split { flex: 1; min-height: 0; display: flex; }
.canvaspane { flex: 425 0 0; min-width: 0; display: flex; flex-direction: column; background: #ebebeb; }
.sep { height: 21px; border-left: 1px dotted #888; margin: 0 5px; flex: none; }
.toggles { display: flex; align-items: center; }
.toggles button:nth-child(2) { margin-right: 4px; }
.toggles button:last-child { margin-right: 0; }
.dev + .sep { margin: 0 6px; }
.last { margin-right: 8px; }
.combo { display: flex; height: 18px; border: 1px solid #8a8a8a; background: #fff; }
.combo select { flex: 1; min-width: 0; appearance: none; padding: 0 0 0 4px; overflow: hidden; line-height: 16px; }
.combo .arr { width: 15px; background: linear-gradient(#f0f0f0, #ccc); border-left: 1px solid #8a8a8a; display: grid; place-items: center; }
.arr svg { width: 8px; height: 5px; }
.dev { width: 171px; }
.canvasrow { flex: 1; min-height: 0; display: flex; }
.canvas { flex: 1; min-width: 0; background: #fff; position: relative; overflow: hidden; }
.device { position: absolute; left: 128px; top: 95px; width: 277px; height: 146px; border: 2px solid #2f62d0; background: #a3a8c2; display: flex; box-shadow: inset 0 -2px #111c30; }
.tag { position: absolute; left: -4px; top: -35px; width: 50px; height: 16px; line-height: 16px; background: #2f66d4; color: #fff; font-weight: 600; text-align: center; transform: rotate(-45deg); }
.head { width: 63px; border-right: 1px solid #4a5068; padding: 25px 0 0 9px; flex: none; display: flex; flex-direction: column; }
.bar { height: 8px; background: #3a4254; margin-bottom: 6px; }
.long { width: 41px; } .short { width: 24px; }
.port { margin: 24px 0 0 13px; }
.slots { flex: 1; display: grid; place-items: center; margin-bottom: 2px; background: repeating-linear-gradient(90deg, transparent 0 23px, #a9afb9 23px 24px); }
.norm { width: 66px; height: 38px; background: #6e6e6e; color: #fff; font: 700 10px/38px "Liberation Sans", sans-serif; text-align: center; }
.zoombar { display: flex; align-items: center; height: 18px; flex: none; }
.ch1 { width: 157px; }
.zoom { width: 148px; margin: 0 17px 0 6px; }
.range { appearance: none; width: 63px; height: 17px; background: linear-gradient(#777, #777) 0 7px / 100% 1px no-repeat, repeating-linear-gradient(90deg, #333 0 1px, transparent 1px 10px) 0 100% / 100% 3px no-repeat; }
.range::-webkit-slider-thumb { appearance: none; width: 7px; height: 11px; background: #999; clip-path: polygon(0 0, 100% 0, 100% 60%, 50% 100%, 0 60%); }
.splitter { width: 8px; flex: none; background: #dcdcdc; border-left: 1px solid #888; display: flex; flex-direction: column; justify-content: center; gap: 10px; }
.splitter button { width: 6px; height: 22px; border: solid #888; border-width: 1px 0; background: #bbb; }
.splitter svg { width: 5px; height: 7px; }
.overview { flex: 534 0 0; min-width: 0; display: flex; flex-direction: column; background: #ebebeb; }
.ovt { padding-left: 10px; padding-right: 20px; }
.tablewrap { flex: 1; min-height: 0; overflow: hidden; padding-top: 7px; }
table { width: 100%; table-layout: fixed; border-collapse: separate; border-spacing: 0; }
.c0 { width: 24px; } .c1 { width: 18px; } .c3 { width: 120px; } .c4 { width: 47px; } .c6 { width: 57px; } .c8 { width: 114px; }
th { height: 19px; padding: 0 0 0 3px; text-align: left; font-weight: 400; white-space: nowrap; line-height: 16px; border: solid #a8a8a8; border-width: 1px 1px 1px 0; background: linear-gradient(#f4f4f4, #d5dbe4); }
th:first-child { background: linear-gradient(#ddd, #c4c4c4); }
th.w { padding: 0; }
td { height: 18px; padding: 0 0 0 3px; line-height: 16px; white-space: nowrap; background: #efefef; border-right: 1px solid #fff; border-bottom: 1px solid #fff; }
td:first-child { background: #ccc; border-right-color: #aaa; }
.in { padding-left: 22px; }
.cur td { background: #d2d8dd; }
.cur td:first-child { background: #c0ccd8; }
.cur td:nth-child(2), .cur td:nth-child(3), .gray td, .mix td:nth-child(2), .mix td:nth-child(3), .mix td:nth-child(5), .mix td:nth-child(6), .mix td:last-child { background: #e0e0e0; }
.gray td:first-child { background: #ccc; }
.oh { padding-left: 23px; }
.inspector { display: flex; align-items: flex-end; justify-content: flex-end; height: 25px; flex: none; background: #b2b2b2; border-top: 2px solid #141c38; border-bottom: 1px solid #fff; gap: 1px; }
.inspector .tab { height: 20px; padding-bottom: 0; }
.inspector .tab.on { margin: 0; border-color: #fafafa #7a7a7a #fafafa #fafafa; }
.p1 { width: 104px; } .p2 { width: 72px; } .p3 { width: 114px; }
.wn { width: 14px; height: 14px; margin-left: auto; }
.inspector .win { padding: 0 4px 6px 17px; }

/* task cards */
.cards { width: 8px; flex: none; overflow: hidden; background: #b2b2b2; display: flex; flex-direction: column; gap: 2px; }
.cardtop { height: 26px; flex: none; padding: 5px 0 0 2px; color: #fff; }
.card { width: 16px; writing-mode: vertical-rl; background: #d8d8d8; border: 1px solid #999; color: #555; font-size: 12px; font-weight: 500; line-height: 10px; gap: 4px; padding: 2px 0; }
.card.on { background: #efefef; color: #111; font-weight: 700; }
.k1 { height: 153px; } .k2 { height: 116px; } .k3 { height: 75px; } .k4 { height: 90px; }

/* footer */
.foot { display: flex; height: 24px; flex: none; background: #1c1c1c; align-items: flex-end; gap: 3px; padding-right: 52px; }
.portal { width: 167px; height: 19px; padding-left: 33px; gap: 10px; color: #fff; font-size: 12px; font-weight: 600; }
.portal svg { width: 6px; height: 11px; }
.task { width: 107px; height: 19px; background: #c0c0c0; color: #444; padding-left: 3px; gap: 3px; }
.task.on { background: #fff; color: #111; font-weight: 600; }
.status { display: flex; margin-left: auto; height: 19px; align-items: center; color: #fff; }
.stb { width: 17px; height: 19px; background: #ccc; margin-right: 8px; }
.msg { display: flex; align-items: center; gap: 5px; border-left: 1px solid #444; padding-left: 4px; }
```
